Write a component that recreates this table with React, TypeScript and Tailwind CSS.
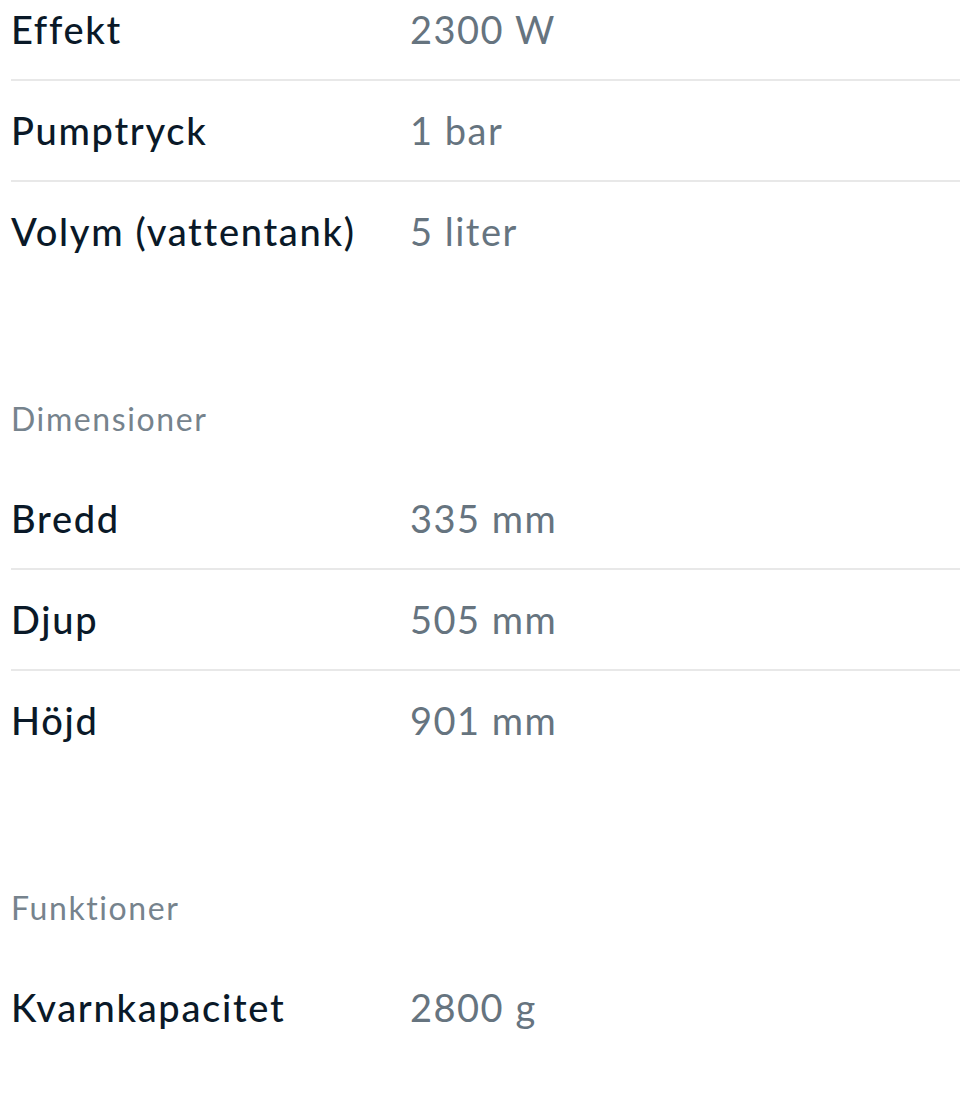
import React from 'react'

interface Spec {
  label: string
  value: string
}

interface Section {
  title?: string
  specs: Spec[]
}

const sections: Section[] = [
  {
    specs: [
      { label: 'Effekt', value: '2300 W' },
      { label: 'Pumptryck', value: '1 bar' },
      { label: 'Volym (vattentank)', value: '5 liter' },
    ],
  },
  {
    title: 'Dimensioner',
    specs: [
      { label: 'Bredd', value: '335 mm' },
      { label: 'Djup', value: '505 mm' },
      { label: 'Höjd', value: '901 mm' },
    ],
  },
  {
    title: 'Funktioner',
    specs: [{ label: 'Kvarnkapacitet', value: '2800 g' }],
  },
]

const SpecRow: React.FC<{ spec: Spec; first: boolean; last: boolean }> = ({ spec, first, last }) => (
  <div
    className={`flex items-center leading-[38px] ${first ? 'pt-[10px]' : 'pt-[30px]'} ${
      last ? 'pb-[32px]' : 'border-b-2 border-[#e8e8e8] pb-[31px]'
    }`}
  >
    <div className="w-[399px] shrink-0 text-[38px] font-medium tracking-[1.7px] text-[#0a1928]">
      {spec.label}
    </div>
    <div className="text-[38px] tracking-[1.5px] text-[#66747f]">{spec.value}</div>
  </div>
)

export default function App() {
  return (
    <div
      className="min-h-[1112px] bg-white pl-[11px] [font-variant-ligatures:none]"
      style={{ fontFamily: 'Lato, "Noto Sans", sans-serif' }}
    >
      {sections.map((section, si) => (
        <div key={si} className={si > 0 ? 'pt-[115px]' : ''}>
          {section.title && (
            <div className="pt-[3px] pb-[31px] text-[32px] leading-[38px] tracking-[1.6px] text-[#76838d]">
              {section.title}
            </div>
          )}
          {section.specs.map((spec, i) => (
            <SpecRow
              key={spec.label}
              spec={spec}
              first={si === 0 && i === 0}
              last={i === section.specs.length - 1}
            />
          ))}
        </div>
      ))}
    </div>
  )
}
